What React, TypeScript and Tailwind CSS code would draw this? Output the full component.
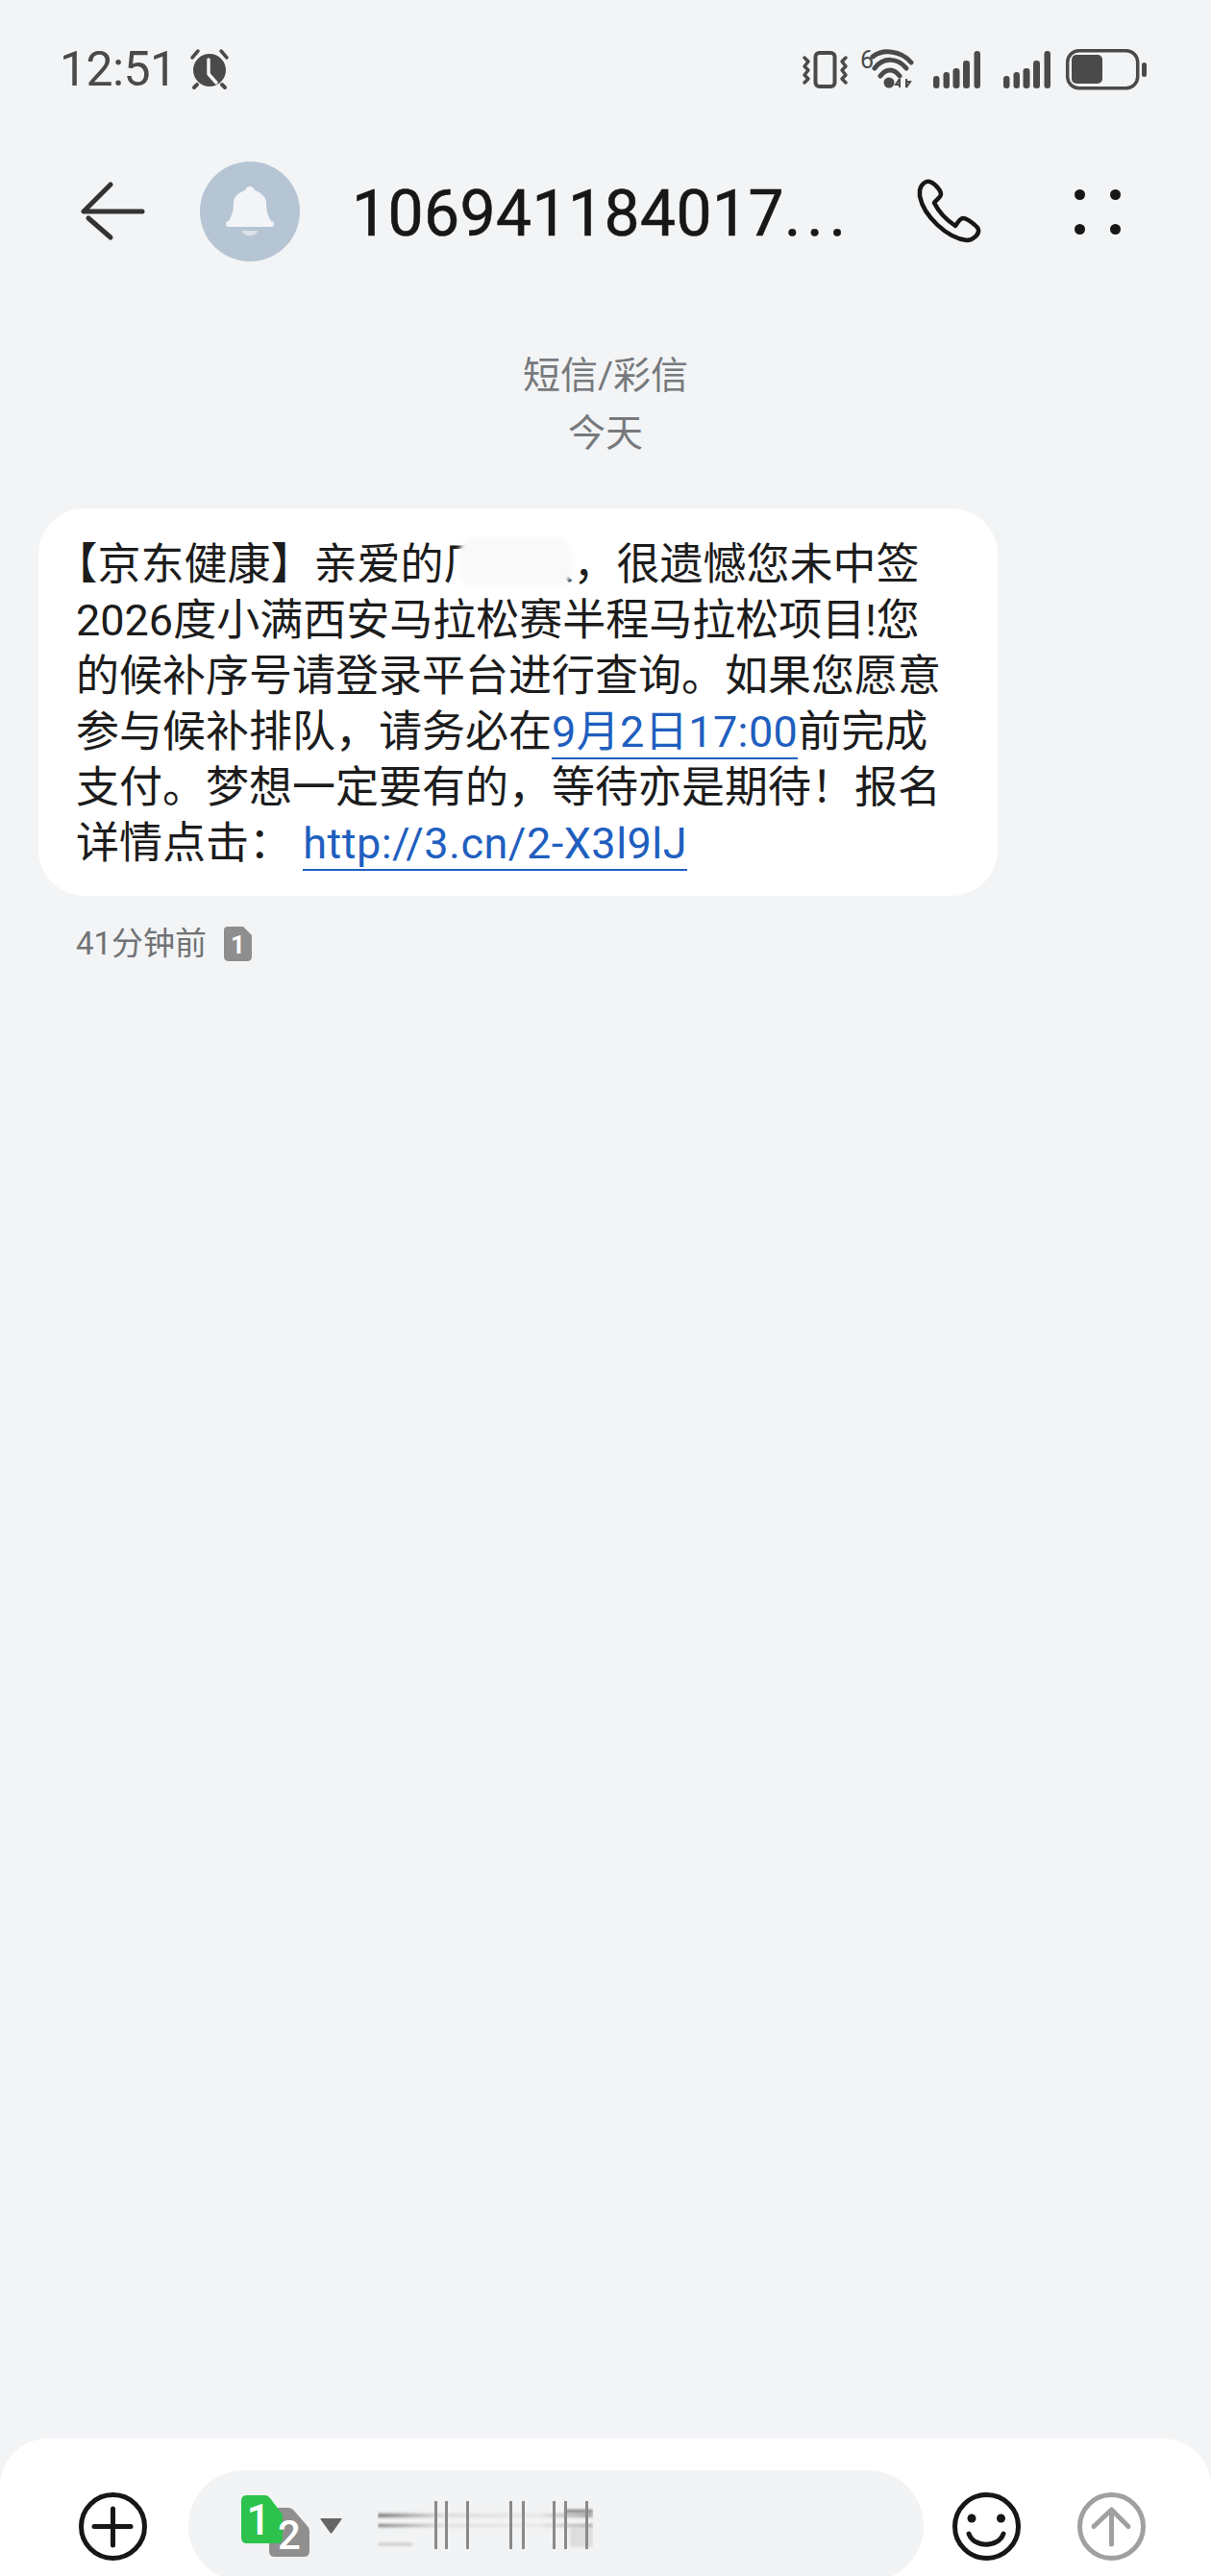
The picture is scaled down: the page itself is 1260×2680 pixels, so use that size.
export default function App() {
  const Signal = () => (
    <svg width="49" height="40" viewBox="0 0 49 40" fill="#4a4a4a">
      <rect x="0" y="27" width="6.5" height="13" rx="3.2" />
      <rect x="10.5" y="23" width="6.5" height="17" rx="3.2" />
      <rect x="20.5" y="19" width="7" height="21" rx="3.2" />
      <rect x="31" y="11" width="7" height="29" rx="3.2" />
      <rect x="42.5" y="1" width="6.5" height="39" rx="3.2" />
    </svg>
  );
  return (
    <div className="w-[1260px] h-[2680px] overflow-hidden flex flex-col bg-[#f2f4f6] font-['Roboto','Noto_Sans_CJK_SC',sans-serif]">
      {/* status bar */}
      <div className="h-[100px] shrink-0 pt-[44px] pl-[62px] pr-[67px] flex items-start justify-between">
        <div className="h-[56px] flex items-center">
          <span className="text-[50px] leading-[56px] text-[#4a4a4a] tracking-[-0.6px]">12:51</span>
          <svg className="ml-[12px]" width="44" height="44" viewBox="0 0 44 44" fill="none">
            <circle cx="22" cy="23" r="17" fill="#4a4a4a" />
            <path d="M21 12 L21 27 L29 36" stroke="#f2f4f6" strokeWidth="3.5" strokeLinecap="round" strokeLinejoin="round" />
            <path d="M4 10 L10 3 M34 3 L40 10" stroke="#4a4a4a" strokeWidth="3.5" strokeLinecap="round" />
            <path d="M9 38 L6 41 M35 38 L38 41" stroke="#4a4a4a" strokeWidth="4" strokeLinecap="round" />
          </svg>
        </div>
        <div className="h-[56px] flex items-center">
          <svg width="51" height="44" viewBox="0 0 51 44" fill="none" stroke="#4a4a4a">
            <rect x="15.5" y="5" width="20" height="35" rx="4" strokeWidth="4" />
            <path d="M4 10 L8 14 L4 19 L8 23 L4 28 L8 32 L4 36" strokeWidth="3.5" strokeLinecap="round" strokeLinejoin="round" />
            <path d="M47 10 L43 14 L47 19 L43 23 L47 28 L43 32 L47 36" strokeWidth="3.5" strokeLinecap="round" strokeLinejoin="round" />
          </svg>
          <svg className="ml-[9px]" width="58" height="50" viewBox="0 -3 58 50" fill="none">
            <text x="2" y="21" fontSize="25" fill="#4a4a4a" fontFamily="Roboto">6</text>
            <path d="M15 9 C25 1 44 2 55 15" stroke="#4a4a4a" strokeWidth="5" strokeLinecap="round" />
            <path d="M17 21 C26 9 41 10 50 21" stroke="#4a4a4a" strokeWidth="5" strokeLinecap="round" />
            <path d="M23 29 C29 21 37 21 43 29" stroke="#4a4a4a" strokeWidth="5" strokeLinecap="round" />
            <circle cx="32" cy="36" r="5.5" fill="#4a4a4a" />
            <path d="M43 32 L43 41 M43 32 L39 38 L42 38 M50 41 L50 32 M50 41 L54 35 L51 35" stroke="#4a4a4a" strokeWidth="2" />
          </svg>
          <span className="ml-[20px] block"><Signal /></span>
          <span className="ml-[24px] block"><Signal /></span>
          <svg className="ml-[14px]" width="86" height="46" viewBox="0 0 86 46" fill="none">
            <rect x="3.7" y="3.7" width="73" height="39" rx="12" stroke="#4a4a4a" strokeWidth="3.5" />
            <rect x="8" y="8" width="32" height="30" rx="5" fill="#4a4a4a" />
            <rect x="81" y="16" width="5" height="15" rx="2.5" fill="#4a4a4a" />
          </svg>
        </div>
      </div>

      {/* header */}
      <div className="h-[240px] shrink-0 pl-[83px] flex items-center">
        <svg width="68" height="62" viewBox="0 0 68 62" fill="none" stroke="#333333" strokeWidth="5" strokeLinecap="round">
          <path d="M32 3 L4 31 H65" strokeLinejoin="round" />
          <path d="M9 38 L32 58" />
        </svg>
        <div className="ml-[57px] w-[104px] h-[104px] rounded-full bg-[#b6c5d3] flex items-center justify-center shrink-0">
          <svg width="104" height="104" viewBox="0 0 104 104" fill="#f2f4f7">
            <path d="M30 62 C35 54 35 46 35 42 C36 35 42 32 47 30 C48 27 50 26 52 26 C54 26 56 27 57 30 C62 32 68 35 69 42 C69 46 69 54 74 62 Z" />
            <rect x="27" y="62" width="50" height="6" rx="3" />
            <path d="M44 72 H60 C59 79 45 79 44 72 Z" fill="#dbe2e9" />
          </svg>
        </div>
        <div className="ml-[54px] w-[528px] pt-[5px] text-[66px] leading-[80px] text-[#171717] whitespace-nowrap tracking-[0.4px] [-webkit-text-stroke:0.6px_#171717]">
          106941184017<span className="tracking-[6px]">...</span>
        </div>
        <svg className="ml-[58px]" width="70" height="70" viewBox="0 0 70 70" fill="none" stroke="#171717" strokeWidth="4.5" strokeLinejoin="round">
          <path d="M5 13 C6 7 11 3 15 4 C20 5 27 13 27 17 C27 20 22 23 20 26 C25 36 33 44 42 50 C44 47 47 42 50 42 C54 42 65 50 66 54 C67 59 60 65 54 65 C34 63 9 40 5 19 Z" />
        </svg>
        <div className="ml-[96px] grid grid-cols-2 gap-x-[26px] gap-y-[25px]">
          <div className="w-[11px] h-[11px] rounded-full bg-[#171717]" />
          <div className="w-[11px] h-[11px] rounded-full bg-[#171717]" />
          <div className="w-[11px] h-[11px] rounded-full bg-[#171717]" />
          <div className="w-[11px] h-[11px] rounded-full bg-[#171717]" />
        </div>
      </div>

      {/* date labels */}
      <div className="mt-[21px] shrink-0 text-center text-[39px] leading-[60px] text-[#77797c]">
        <div>短信/彩信</div>
        <div>今天</div>
      </div>

      {/* bubble */}
      <div className="relative ml-[40px] mt-[48px] w-[998px] h-[403px] shrink-0 rounded-[48px] bg-white pl-[39px] pt-[30px] text-[45px] leading-[58px] text-[#1c1c1c] whitespace-nowrap [text-spacing-trim:trim-start]">
        <div>【京东健康】亲爱的厂　八，很遗憾您未中签</div>
        <div>2026度小满西安马拉松赛半程马拉松项目!您</div>
        <div>的候补序号请登录平台进行查询。如果您愿意</div>
        <div>
          参与候补排队，请务必在<span className="text-[#1f5fbf] border-b-2 border-[#1f5fbf] tracking-[0.4px]">9月2日17:00</span>前完成
        </div>
        <div>支付。梦想一定要有的，等待亦是期待！报名</div>
        <div>
          详情点击： <span className="text-[#1f5fbf] border-b-2 border-[#1f5fbf] tracking-[0.5px]">http://3.cn/2-X3l9lJ</span>
        </div>
        <div className="absolute left-[437px] top-[31px] w-[118px] h-[50px] rounded-[16px] bg-[#f9f9f9] blur-[2px]" />
      </div>

      {/* meta */}
      <div className="ml-[79px] mt-[30px] h-[40px] shrink-0 flex items-center">
        <span className="text-[33px] leading-[40px] text-[#707274]">41分钟前</span>
        <svg className="ml-[18px]" width="29" height="36" viewBox="0 0 29 36">
          <path d="M4 0 H20 L29 9 V31 Q29 36 24 36 H5 Q0 36 0 31 V4 Q0 0 4 0 Z" fill="#8e8e8e" />
          <text x="14.5" y="28" textAnchor="middle" fontSize="26" fontWeight="700" fill="#ffffff" fontFamily="Roboto">1</text>
        </svg>
      </div>

      {/* composer */}
      <div className="mt-auto h-[143px] shrink-0 rounded-t-[50px] bg-white pt-[33px] overflow-hidden">
        <div className="h-[116px] pl-[82px] flex items-center">
          <svg width="71" height="71" viewBox="0 0 71 71" fill="none" stroke="#171717" strokeWidth="5" strokeLinecap="round">
            <circle cx="35.5" cy="35.5" r="33" />
            <path d="M16 35.5 H54 M35.5 17 V55" />
          </svg>
          <div className="ml-[43px] w-[765px] h-[116px] rounded-full bg-[#f2f3f4] pl-[55px] flex items-center">
            <svg width="71" height="76" viewBox="0 -6 71 76">
              <path d="M33 13 H49 Q52 13 54 15 L68 31 Q71 34 71 37 V58 Q71 64 65 64 H35 Q29 64 29 58 V19 Q29 13 33 13 Z" fill="#8f8f8f" />
              <path d="M6 0 H25 Q28 0 30 3 L43 20 V44 Q43 50 37 50 H6 Q0 50 0 44 V6 Q0 0 6 0 Z" fill="#2cc24c" />
              <text x="18" y="41" textAnchor="middle" fontSize="44" fontWeight="500" fill="#ffffff" fontFamily="Roboto">1</text>
              <text x="50" y="56" textAnchor="middle" fontSize="42" fontWeight="500" fill="#ffffff" fontFamily="Roboto">2</text>
            </svg>
            <svg className="ml-[11px]" width="23" height="16" viewBox="0 0 23 16" fill="#666666">
              <path d="M1 0 H22 Q23 0 22.5 1 L12.5 15 Q11.5 16 10.5 15 L0.5 1 Q0 0 1 0 Z" />
            </svg>
            <svg className="ml-[37px]" width="224" height="52" viewBox="0 0 224 52">
              <defs>
                <filter id="b" x="-10%" y="-50%" width="120%" height="200%">
                  <feGaussianBlur stdDeviation="1.4" />
                </filter>
                <linearGradient id="g" x1="0" x2="1" y1="0" y2="0">
                  <stop offset="0" stopColor="#777777" />
                  <stop offset="0.3" stopColor="#dcdcdc" />
                  <stop offset="0.75" stopColor="#e6e6e6" />
                  <stop offset="1" stopColor="#a0a0a0" />
                </linearGradient>
              </defs>
              <g filter="url(#b)">
                <rect x="0" y="13" width="224" height="4" fill="url(#g)" />
                <rect x="0" y="24" width="224" height="3" fill="url(#g)" />
                <rect x="0" y="44" width="36" height="2" fill="#b5b5b5" />
                <rect x="195" y="9" width="29" height="3" fill="#777777" />
                <rect x="200" y="28" width="24" height="20" fill="#dddddd" />
              </g>
              <g fill="#8a8a8a">
                <rect x="59" y="0" width="3" height="50" />
                <rect x="70" y="0" width="3" height="50" />
                <rect x="92" y="0" width="3" height="50" />
                <rect x="137" y="0" width="3" height="50" />
                <rect x="150" y="0" width="3" height="50" />
                <rect x="182" y="0" width="3" height="50" />
                <rect x="194" y="0" width="3" height="50" />
                <rect x="216" y="0" width="3" height="50" />
              </g>
            </svg>
          </div>
          <svg className="ml-[30px]" width="71" height="71" viewBox="0 0 71 71" fill="none" stroke="#171717" strokeWidth="5" strokeLinecap="round">
            <circle cx="35.5" cy="35.5" r="33" />
            <circle cx="20" cy="27" r="4.5" fill="#171717" stroke="none" />
            <circle cx="50.5" cy="27" r="4.5" fill="#171717" stroke="none" />
            <path d="M17 43 C22 58 48 58 53 43" />
          </svg>
          <svg className="ml-[59px]" width="71" height="71" viewBox="0 0 71 71" fill="none" stroke="#a0a0a0" strokeWidth="5" strokeLinecap="round" strokeLinejoin="round">
            <circle cx="35.5" cy="35.5" r="33" />
            <path d="M17 35.5 L35.5 18 L53 35.5 M35.5 18 V54" />
          </svg>
        </div>
      </div>
    </div>
  );
}
